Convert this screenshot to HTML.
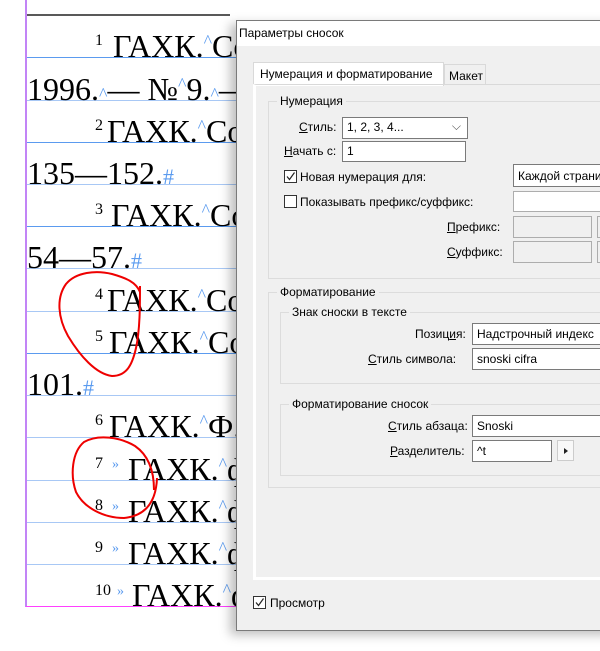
<!DOCTYPE html>
<html><head><meta charset="utf-8"><style>
*{margin:0;padding:0;box-sizing:border-box}
body{width:600px;height:651px;background:#fff;position:relative;overflow:hidden;font-family:"Liberation Sans","DejaVu Sans",sans-serif;font-size:12px;color:#000}
.a{position:absolute}
.dlg{left:236px;top:20px;width:380px;height:611px;background:#f0f0f0;border:1px solid #7a7a7a;box-shadow:-6px 4px 10px rgba(0,0,0,.25)}
.title{position:absolute;left:0;top:0;right:0;height:25px;background:#fff;padding:5px 0 0 2px}
.l{position:absolute;white-space:nowrap}
.box{position:absolute;background:#fff;border:1px solid #7a7a7a;padding:2px 0 0 4px;white-space:nowrap;overflow:hidden}
.dis{position:absolute;background:#f0f0f0;border:1px solid #adadad}
.grp{position:absolute;border:1px solid #dcdcdc}
.gl{position:absolute;background:#f0f0f0;padding:0 3px;top:-8px;left:8px;white-space:nowrap}
.cb{position:absolute;width:13px;height:13px;border:1px solid #333;background:#fff}
u{text-decoration:underline}
</style></head><body>
<svg class="a" style="left:0;top:0" width="240" height="651">
<line x1="26" y1="0" x2="26" y2="607" stroke="#9a32f0" stroke-width="1.2"/>
<line x1="26" y1="606.5" x2="240" y2="606.5" stroke="#ff40ff" stroke-width="1"/>
<line x1="27" y1="15" x2="230" y2="15" stroke="#222" stroke-width="1.5"/>
<g stroke-width="1">
<line x1="27" y1="57.5" x2="240" y2="57.5" stroke="#5b9bef"/>
<line x1="27" y1="100.5" x2="240" y2="100.5" stroke="#a8c8f5"/>
<line x1="27" y1="142.5" x2="240" y2="142.5" stroke="#5b9bef"/>
<line x1="27" y1="184.5" x2="240" y2="184.5" stroke="#a8c8f5"/>
<line x1="27" y1="226.5" x2="240" y2="226.5" stroke="#5b9bef"/>
<line x1="27" y1="268.5" x2="240" y2="268.5" stroke="#a8c8f5"/>
<line x1="27" y1="311.5" x2="240" y2="311.5" stroke="#a8c8f5"/>
<line x1="27" y1="353.5" x2="240" y2="353.5" stroke="#5b9bef"/>
<line x1="27" y1="395.5" x2="240" y2="395.5" stroke="#a8c8f5"/>
<line x1="27" y1="437.5" x2="240" y2="437.5" stroke="#a8c8f5"/>
<line x1="27" y1="480.5" x2="240" y2="480.5" stroke="#a8c8f5"/>
<line x1="27" y1="522.5" x2="240" y2="522.5" stroke="#a8c8f5"/>
<line x1="27" y1="564.5" x2="240" y2="564.5" stroke="#a8c8f5"/>
</g>
<g font-family="Liberation Serif,serif" font-size="32" fill="#000">
<text x="95" y="45" font-size="16">1</text><text x="113" y="57">ГАХК.<tspan fill="#5b9bef" font-size="18" dy="-10">^</tspan><tspan dy="10">Со</tspan></text>
<text x="27" y="100">1996.<tspan fill="#5b9bef" font-size="18">^</tspan>— №<tspan fill="#5b9bef" font-size="18" dy="-10">^</tspan><tspan dy="10">9.</tspan><tspan fill="#5b9bef" font-size="18">^</tspan>—</text>
<text x="95" y="130" font-size="16">2</text><text x="107" y="142">ГАХК.<tspan fill="#5b9bef" font-size="18" dy="-10">^</tspan><tspan dy="10">Со</tspan></text>
<text x="27" y="184">135—152.<tspan fill="#5b9bef" font-size="22">#</tspan></text>
<text x="95" y="214" font-size="16">3</text><text x="111" y="226">ГАХК.<tspan fill="#5b9bef" font-size="18" dy="-10">^</tspan><tspan dy="10">Со</tspan></text>
<text x="27" y="268">54—57.<tspan fill="#5b9bef" font-size="22">#</tspan></text>
<text x="95" y="299" font-size="16">4</text><text x="107" y="311">ГАХК.<tspan fill="#5b9bef" font-size="18" dy="-10">^</tspan><tspan dy="10">Со</tspan></text>
<text x="95" y="341" font-size="16">5</text><text x="109" y="353">ГАХК.<tspan fill="#5b9bef" font-size="18" dy="-10">^</tspan><tspan dy="10">Со</tspan></text>
<text x="27" y="395">101.<tspan fill="#5b9bef" font-size="22">#</tspan></text>
<text x="95" y="425" font-size="16">6</text><text x="109" y="437">ГАХК.<tspan fill="#5b9bef" font-size="18" dy="-10">^</tspan><tspan dy="10">Ф.</tspan></text>
<text x="95" y="468" font-size="16">7</text><text x="112" y="468" font-size="14" fill="#5b9bef">»</text><text x="128" y="480">ГАХК.<tspan fill="#5b9bef" font-size="18" dy="-10">^</tspan><tspan dy="10">ф</tspan></text>
<text x="95" y="510" font-size="16">8</text><text x="112" y="510" font-size="14" fill="#5b9bef">»</text><text x="128" y="522">ГАХК.<tspan fill="#5b9bef" font-size="18" dy="-10">^</tspan><tspan dy="10">ф</tspan></text>
<text x="95" y="552" font-size="16">9</text><text x="112" y="552" font-size="14" fill="#5b9bef">»</text><text x="128" y="564">ГАХК.<tspan fill="#5b9bef" font-size="18" dy="-10">^</tspan><tspan dy="10">ф</tspan></text>
<text x="95" y="595" font-size="16">10</text><text x="117" y="595" font-size="14" fill="#5b9bef">»</text><text x="132" y="606">ГАХК.<tspan fill="#5b9bef" font-size="18" dy="-10">^</tspan><tspan dy="10">ф</tspan></text>
</g>
<path d="M140,286 C140,305 140,330 136,348 C132,366 126,376 112,376 C96,374 80,356 68,336 C58,318 56,298 66,284 C76,272 96,270 112,274 C126,278 136,282 140,292" fill="none" stroke="#e00" stroke-width="2"/>
<path d="M154,490 C154,470 148,455 135,446 C120,437 98,434 84,442 C72,452 70,475 76,492 C84,508 104,518 124,518 C144,516 156,504 157,478" fill="none" stroke="#e00" stroke-width="2"/>
</svg>
<div class="a dlg">
<div class="title">Параметры сносок</div>
<!-- tabs -->
<div class="l" style="left:16px;top:41px;width:191px;height:24px;background:#fff;border:1px solid #d9d9d9;border-bottom:none;padding:4px 0 0 6px">Нумерация и форматирование</div>
<div class="l" style="left:207px;top:43px;width:42px;height:20px;background:#f0f0f0;border:1px solid #d9d9d9;border-bottom:none;padding:4px 0 0 4px">Макет</div>
<div class="l" style="left:16px;top:63px;width:400px;height:496px;border:3px solid #fff;border-top:1px solid #d9d9d9;border-left:3px solid #fff"></div>
<!-- numbering group -->
<div class="grp" style="left:31px;top:80px;width:380px;height:178px"><div class="gl">Нумерация</div></div>
<div class="l" style="left:62px;top:99px"><u>С</u>тиль:</div>
<div class="box" style="left:105px;top:96px;width:126px;height:22px">1, 2, 3, 4...<span style="position:absolute;right:6px;top:1px;color:#555">⌵</span></div>
<div class="l" style="left:47px;top:123px"><u>Н</u>ачать с:</div>
<div class="box" style="left:105px;top:120px;width:124px;height:21px">1</div>
<div class="cb" style="left:47px;top:149px"><svg width="11" height="11" style="position:absolute;left:0;top:0"><path d="M2,5.5 L4.5,8.5 L9.5,1.5" fill="none" stroke="#222" stroke-width="1.2"/></svg></div>
<div class="l" style="left:63px;top:149px">Новая нумерация для:</div>
<div class="box" style="left:276px;top:143px;width:120px;height:23px;padding-top:4px">Каждой страницы</div>
<div class="cb" style="left:47px;top:174px"></div>
<div class="l" style="left:63px;top:174px">Показывать префикс/суффикс:</div>
<div class="dis" style="left:276px;top:170px;width:120px;height:21px;background:#fff"></div>
<div class="l" style="left:210px;top:199px"><u>П</u>рефикс:</div>
<div class="dis" style="left:276px;top:195px;width:79px;height:22px"></div>
<div class="dis" style="left:360px;top:195px;width:20px;height:22px"></div>
<div class="l" style="left:210px;top:224px"><u>С</u>уффикс:</div>
<div class="dis" style="left:276px;top:220px;width:79px;height:22px"></div>
<div class="dis" style="left:360px;top:220px;width:20px;height:22px"></div>
<!-- formatting group -->
<div class="grp" style="left:31px;top:271px;width:380px;height:196px"><div class="gl">Форматирование</div></div>
<div class="grp" style="left:43px;top:291px;width:370px;height:72px"><div class="gl">Знак сноски в тексте</div></div>
<div class="l" style="left:178px;top:306px">Позиц<u>и</u>я:</div>
<div class="box" style="left:235px;top:302px;width:140px;height:22px;padding-top:3px">Надстрочный индекс</div>
<div class="l" style="left:131px;top:331px"><u>С</u>тиль символа:</div>
<div class="box" style="left:235px;top:327px;width:140px;height:22px;padding-top:3px">snoski cifra</div>
<div class="grp" style="left:43px;top:383px;width:370px;height:72px"><div class="gl">Форматирование сносок</div></div>
<div class="l" style="left:151px;top:398px"><u>С</u>тиль абзаца:</div>
<div class="box" style="left:235px;top:394px;width:140px;height:22px;padding-top:3px">Snoski</div>
<div class="l" style="left:153px;top:423px"><u>Р</u>азделитель:</div>
<div class="box" style="left:235px;top:419px;width:80px;height:22px;padding-top:3px">^t</div>
<div class="l" style="left:320px;top:419px;width:17px;height:21px;background:#f8f8f8;border:1px solid #ccc"><svg width="15" height="19"><path d="M6,7 L10,10 L6,13Z" fill="#222"/></svg></div>
<div class="cb" style="left:16px;top:575px"><svg width="11" height="11" style="position:absolute;left:0;top:0"><path d="M2,5.5 L4.5,8.5 L9.5,1.5" fill="none" stroke="#222" stroke-width="1.2"/></svg></div>
<div class="l" style="left:33px;top:575px">Просмотр</div>
</div>
</body></html>
